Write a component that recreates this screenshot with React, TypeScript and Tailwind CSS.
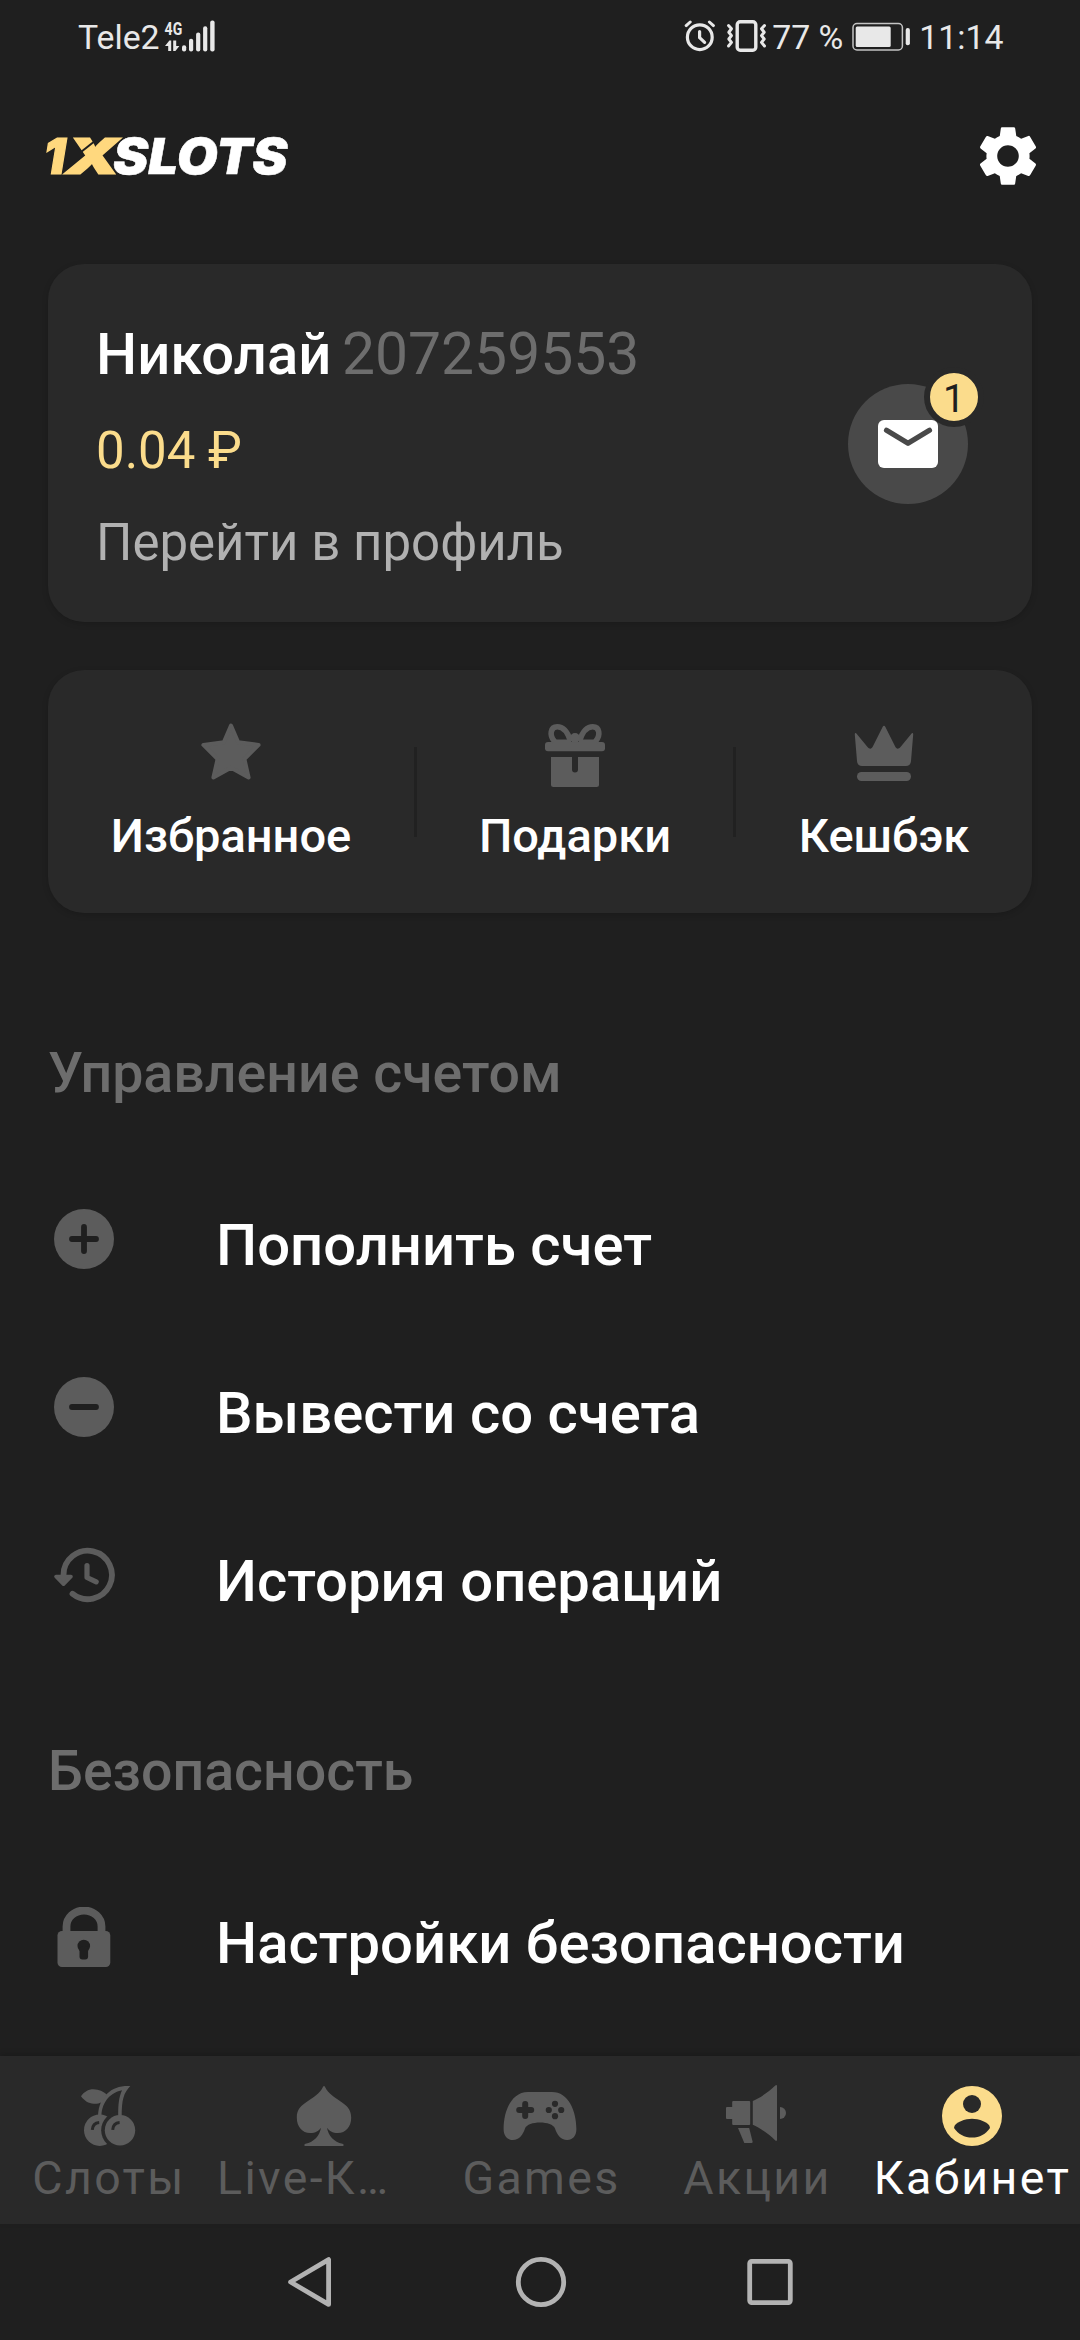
import type { ReactNode } from 'react';
import { MdSettings } from 'react-icons/md';

const BG = '#1f1f1f';
const CARD = '#292929';

function AlarmIcon() {
  return (
    <svg className="mt-[20px] h-[34px] w-[32px]" viewBox="684 20 32 34" fill="none" stroke="#e8e8e8" strokeLinecap="round">
      <circle cx="699.8" cy="37.2" r="12.4" strokeWidth="3.2" />
      <path d="M699.6 31.5V37.7L704.6 42.4" strokeWidth="3.2" strokeLinejoin="round" />
      <path d="M686.2 25.6L690.2 22M713.4 25.6L709.4 22" strokeWidth="3" />
    </svg>
  );
}

function VibrateIcon() {
  return (
    <svg className="ml-[10px] mt-[19px] h-[34px] w-[42px]" viewBox="726 19 42 34" fill="none" stroke="#e8e8e8">
      <rect x="737.2" y="21.7" width="18.6" height="28.6" rx="3" strokeWidth="3.4" />
      <path d="M728.5 25.5L731.5 28.8L728.8 32.2L731.5 35.6L728.8 39L731.5 42.4L728.5 46" strokeWidth="3" strokeLinecap="round" strokeLinejoin="round" />
      <path d="M764.5 25.5L761.5 28.8L764.2 32.2L761.5 35.6L764.2 39L761.5 42.4L764.5 46" strokeWidth="3" strokeLinecap="round" strokeLinejoin="round" />
    </svg>
  );
}

function BatteryIcon() {
  return (
    <svg className="ml-[8px] mt-[22px] h-[30px] w-[60px]" viewBox="851 22 60 30" fill="#e8e8e8">
      <rect x="853" y="23.6" width="49.4" height="26.4" rx="4" fill="none" stroke="#c4c4c4" strokeWidth="1.5" />
      <rect x="855.7" y="26.4" width="35" height="20.6" rx="1.5" />
      <rect x="905.7" y="28" width="4.2" height="17.2" rx="2" />
    </svg>
  );
}

function SignalIcon() {
  return (
    <svg className="ml-[4px] mt-[18px] h-[36px] w-[52px]" viewBox="164 18 52 36" fill="#e8e8e8">
      <text x="164.6" y="34.6" fontFamily="Roboto, sans-serif" fontWeight="700" fontSize="18.6" textLength="17.6" lengthAdjust="spacingAndGlyphs">4G</text>
      <path d="M165 46L169.4 40.4H171.2V51H168.2V46ZM173.2 40.4H176.2V46H179.4L175.4 51H173.2Z" />
      <rect x="182" y="45.2" width="4.2" height="6.4" rx="2" />
      <rect x="189" y="38.8" width="4.2" height="12.8" rx="2" />
      <rect x="196.1" y="32.4" width="4.2" height="19.2" rx="2" />
      <rect x="203.1" y="26.2" width="4.2" height="25.4" rx="2" />
      <rect x="210.2" y="20.4" width="4.4" height="31.2" rx="2" />
    </svg>
  );
}

function StatusBar() {
  return (
    <div className="flex h-[75px] shrink-0 items-start justify-between pl-[78px] pr-[76.5px] text-[33.8px] leading-[75px] text-[#e8e8e8]">
      <div className="flex items-start">
        <span>Tele2</span>
        <SignalIcon />
      </div>
      <div className="flex items-start">
        <AlarmIcon />
        <VibrateIcon />
        <span className="ml-[4px]">77 %</span>
        <BatteryIcon />
        <span className="ml-[8px]">11:14</span>
      </div>
    </div>
  );
}

function Logo() {
  return (
    <svg className="h-[56px] w-[254px] overflow-visible" viewBox="40 128 254 56" fontFamily="Inter, sans-serif" fontWeight="900" fontStyle="italic" fontSize="49.5">
      <text x="43.5" y="174" fill="#ffd87e" stroke="#ffd87e" strokeWidth="1.2" textLength="22" lengthAdjust="spacingAndGlyphs">1</text>
      <text x="65.5" y="174" fill="#ffd87e" stroke="#ffd87e" strokeWidth="1.2" textLength="54" lengthAdjust="spacingAndGlyphs">X</text>
      <path d="M81 152L95.5 140.5" stroke={BG} strokeWidth="2" />
      <text x="113" y="174" fill="#fff" stroke="#fff" strokeWidth="0.5" textLength="174.5" lengthAdjust="spacingAndGlyphs">SLOTS</text>
    </svg>
  );
}

function MailButton() {
  return (
    <div className="relative mr-[64px] mt-[120px] flex size-[120px] items-center justify-center rounded-full bg-[#494949]">
      <svg className="h-[48px] w-[60px]" viewBox="0 0 60 48">
        <rect width="60" height="48" rx="6" fill="#fff" />
        <path d="M8.5 10.3L30 23.3L51.5 10.3" fill="none" stroke="#494949" strokeWidth="5.2" strokeLinecap="round" strokeLinejoin="round" />
      </svg>
      <div className="absolute -right-[16px] -top-[17px] flex size-[60px] items-center justify-center rounded-full border-[6px] border-[#292929] bg-[#fbdc8c] pt-[3px] text-[39px] leading-[48px] text-[#1f1f1f]">
        1
      </div>
    </div>
  );
}

function StarIcon() {
  return (
    <svg className="h-[72px] w-[72px]" viewBox="195 718 72 72" fill="#5c5c5c" stroke="#5c5c5c" strokeWidth="4" strokeLinejoin="round">
      <path d="M231 725.5L238.2 742.2L258.6 744.9L244.4 759L248.6 777.5L231 767.8L213.4 777.5L217.6 759L203.4 744.9L223.8 742.2Z" />
    </svg>
  );
}

function GiftIcon() {
  return (
    <svg className="h-[72px] w-[72px]" viewBox="539 718 72 72" fill="#5c5c5c">
      <rect x="545" y="742" width="60" height="9.2" rx="3" />
      <path d="M551 757H572V769.5A3 3 0 0 0 578 769.5V757H599V784.5A2.5 2.5 0 0 1 596.5 787H553.5A2.5 2.5 0 0 1 551 784.5Z" />
      <path d="M570.5 741C567.5 731.5 562.5 726.8 557.2 726.8C550.5 726.8 549 735 554.5 741.5" fill="none" stroke="#5c5c5c" strokeWidth="5.6" />
      <path d="M579.5 741C582.5 731.5 587.5 726.8 592.8 726.8C599.5 726.8 601 735 595.5 741.5" fill="none" stroke="#5c5c5c" strokeWidth="5.6" />
      <path d="M554 739.5H571V742.5H554ZM579 739.5H596V742.5H579Z" />
      <circle cx="575" cy="738" r="5" />
    </svg>
  );
}

function CrownIcon() {
  return (
    <svg className="h-[72px] w-[72px]" viewBox="848 718 72 72" fill="#5c5c5c">
      <path d="M854.8 734.5C854.6 732.7 855.9 732.5 856.8 734L867.5 747C869.5 749.2 871.5 749.2 872.7 746.8L882.6 727C883.4 725.4 884.6 725.4 885.4 727L895.3 746.8C896.5 749.2 898.5 749.2 900.5 747L911.2 734C912.1 732.5 913.4 732.7 913.2 734.5L911 761C910.6 764.5 909 766 906 766H862C859 766 857.4 764.5 857 761Z" />
      <rect x="857" y="772" width="54" height="9" rx="4.5" />
    </svg>
  );
}

function PlusIcon() {
  return (
    <svg className="size-[60px]" viewBox="0 0 60 60">
      <circle cx="30" cy="30" r="30" fill="#5c5c5c" />
      <path d="M30 18V42M18 30H42" stroke={BG} strokeWidth="5.8" strokeLinecap="round" />
    </svg>
  );
}

function MinusIcon() {
  return (
    <svg className="size-[60px]" viewBox="0 0 60 60">
      <circle cx="30" cy="30" r="30" fill="#5c5c5c" />
      <path d="M18 30H42" stroke={BG} strokeWidth="5.8" strokeLinecap="round" />
    </svg>
  );
}

function HistoryIcon() {
  return (
    <svg className="size-[62px]" viewBox="53 1544 62 62" fill="none" stroke="#5c5c5c" strokeLinecap="round" strokeLinejoin="round">
      <path d="M63.5 1575A24.2 24.2 0 1 1 72.5 1593.8" strokeWidth="5.8" />
      <path d="M56 1576.5H71L63.5 1584.2Z" fill="#5c5c5c" strokeWidth="3.6" />
      <path d="M87 1565.5V1577.5L96.2 1581.8" strokeWidth="5.2" />
    </svg>
  );
}

function LockIcon() {
  return (
    <svg className="size-[60px]" viewBox="53.5 1907 60 60">
      <path d="M66 1934V1926.5A17.5 16 0 0 1 101 1926.5V1934" fill="none" stroke="#5c5c5c" strokeWidth="7.8" />
      <rect x="57" y="1931" width="52.8" height="36" rx="4.5" fill="#5c5c5c" />
      <circle cx="83.3" cy="1946" r="6.3" fill={BG} />
      <rect x="79" y="1946" width="8.6" height="13.6" rx="3" fill={BG} />
    </svg>
  );
}

function CherryIcon() {
  return (
    <svg className="h-[72px] w-[84px]" viewBox="66 2080 84 72" fill="#5c5c5c">
      <circle cx="99.7" cy="2130.2" r="15.7" />
      <circle cx="120" cy="2130.2" r="18.8" fill={CARD} />
      <circle cx="120" cy="2130.2" r="15.2" />
      <path d="M98 2116C98.5 2105 102 2098.5 107 2093.7C113 2088 120 2085.6 130.3 2086C123.5 2093 121.7 2100 121.7 2116H118.2C118.2 2104 118.8 2098 122 2090.3C112 2092 101.7 2101 101.5 2116Z" />
      <path d="M81 2096.3C84 2092 88 2089.3 93.5 2089.3C99 2089.3 103.5 2091.5 106.8 2094.6C105 2097 103.5 2099.5 102.3 2102C99 2103.6 96.5 2103.8 93.7 2103.7C88.5 2103.5 84.5 2101 81 2096.3Z" />
      <path d="M92.3 2129.8C92.6 2125 95 2122.7 99.2 2122.4M112.7 2129.8C113 2125 115.4 2122.7 119.6 2122.4" fill="none" stroke={CARD} strokeWidth="3" />
    </svg>
  );
}

function SpadeIcon() {
  return (
    <svg className="h-[72px] w-[84px]" viewBox="282 2080 84 72" fill="#5c5c5c">
      <path d="M323.2 2086.5C323.6 2085.8 324.4 2085.8 324.8 2086.5C332 2101.5 351.2 2101 351.2 2117.5C351.2 2127 345.5 2133 338 2133C332.5 2133 329 2131 326.9 2127.5C328.5 2136 334 2142 342.5 2143.8C344 2144.2 344 2146 342.8 2146H305.2C304 2146 304 2144.2 305.5 2143.8C314 2142 319.5 2136 321.1 2127.5C319 2131 315.5 2133 310 2133C302.5 2133 296.8 2127 296.8 2117.5C296.8 2101 316 2101.5 323.2 2086.5Z" />
    </svg>
  );
}

function GamepadIcon() {
  return (
    <svg className="h-[72px] w-[84px]" viewBox="498 2080 84 72" fill="#5c5c5c">
      <path d="M528 2092H552C568.5 2092 576.4 2111 576.4 2129C576.4 2136 572.5 2140 567.3 2140C560.5 2140 557 2134.5 555 2128.5C553.5 2124.5 547 2122.5 540 2122.5C533 2122.5 526.5 2124.5 525 2128.5C523 2134.5 519.5 2140 512.7 2140C507.5 2140 503.6 2136 503.6 2129C503.6 2111 511.5 2092 528 2092Z" />
      <path d="M525.2 2104V2116M519.2 2110H531.2" stroke={CARD} strokeWidth="6" strokeLinecap="round" />
      <g fill={CARD}>
        <circle cx="555" cy="2103.8" r="3.1" />
        <circle cx="555" cy="2116.2" r="3.1" />
        <circle cx="548.8" cy="2110" r="3.1" />
        <circle cx="561.2" cy="2110" r="3.1" />
      </g>
    </svg>
  );
}

function MegaphoneIcon() {
  return (
    <svg className="h-[72px] w-[84px]" viewBox="714 2080 84 72" fill="#5c5c5c">
      <path d="M733.2 2101H749.2Q750.2 2101 750.2 2102V2124Q750.2 2125 749.2 2125H733.2Q732.2 2125 732.2 2124V2119H727Q726 2119 726 2118V2108Q726 2107 727 2107H732.2V2102Q732.2 2101 733.2 2101Z" />
      <path d="M752.8 2101C760 2098 769 2091.5 775.3 2085.5Q777 2084.3 777 2086.5V2139.5Q777 2141.7 775.3 2140.5C769 2134 760 2128 752.8 2124.8Z" />
      <path d="M780 2107A6 6 0 0 1 780 2119Z" />
      <path d="M738 2128H749.2L752.6 2141.5Q752.8 2143 751.5 2143H744.3Z" />
    </svg>
  );
}

function AccountIcon() {
  return (
    <svg className="h-[72px] w-[84px]" viewBox="930 2080 84 72">
      <circle cx="972" cy="2116" r="30" fill="#fbdc8c" />
      <circle cx="972" cy="2104" r="9" fill={CARD} />
      <path d="M972 2137.6C964.5 2137.6 957.9 2133.8 954 2127.9C954.1 2122 966 2118.7 972 2118.7C978 2118.7 989.9 2122 990 2127.9C986.1 2133.8 979.5 2137.6 972 2137.6Z" fill={CARD} />
    </svg>
  );
}

function Tile({ icon, label, width }: { icon: ReactNode; label: string; width: string }) {
  return (
    <div className={`flex flex-col items-center pt-[48px] ${width}`}>
      {icon}
      <span className="mt-[18px] whitespace-nowrap text-[47px] font-medium leading-[56px] text-white">{label}</span>
    </div>
  );
}

function Divider() {
  return <div className="mt-[77px] h-[90px] w-[3px] bg-[#212121]" />;
}

function Section({ title, children }: { title: string; children: ReactNode }) {
  return (
    <section>
      <h2 className="ml-[48px] text-[55.5px] font-medium leading-[64px] text-[#6d6d6d]">{title}</h2>
      <div className="mt-[55px]">{children}</div>
    </section>
  );
}

function Row({ icon, label }: { icon: ReactNode; label: string }) {
  return (
    <div className="flex h-[168px] items-center">
      <div className="mb-[12px] flex w-[168px] justify-center">{icon}</div>
      <span className="ml-[48px] whitespace-nowrap text-[58px] font-medium leading-[70px] text-white">{label}</span>
    </div>
  );
}

const tabs = [
  { icon: <CherryIcon />, label: 'Слоты', tone: 'text-[#5c5c5c] pl-[2px]' },
  { icon: <SpadeIcon />, label: 'Live-К…', tone: 'text-[#5c5c5c] self-start pl-[1px]' },
  { icon: <GamepadIcon />, label: 'Games', tone: 'text-[#5c5c5c] pl-[3px]' },
  { icon: <MegaphoneIcon />, label: 'Акции', tone: 'text-[#5c5c5c] pl-[3px]' },
  { icon: <AccountIcon />, label: 'Кабинет', tone: 'text-white pl-[1px]' },
];

export default function App() {
  return (
    <div className="flex h-[2340px] w-[1080px] flex-col overflow-hidden bg-[#1f1f1f] font-['Roboto',sans-serif]">
      <StatusBar />
      <header className="flex h-[162px] shrink-0 items-center justify-between pl-[40px] pr-[36px]">
        <Logo />
        <MdSettings className="size-[72px] text-white" />
      </header>

      <main className="flex-1 overflow-hidden pt-[27px]">
        <div className="mx-[48px] flex h-[358px] justify-between rounded-[36px] bg-[#292929] shadow-[0_2px_6px_rgba(0,0,0,0.16)]">
          <div className="ml-[48px] pt-[55px]">
            <div className="flex whitespace-nowrap leading-[70px]">
              <span className="text-[58px] font-medium text-white">Николай</span>
              <span className="ml-[10.5px] text-[58.8px] text-[#6d6d6d]">207259553</span>
            </div>
            <div className="mt-[32px] text-[51px] leading-[60px] text-[#fbdc8c]">0.04 ₽</div>
            <div className="mt-[32px] text-[51px] leading-[60px] text-[#b1b1b1]">Перейти в профиль</div>
          </div>
          <MailButton />
        </div>

        <div className="mx-[48px] mt-[48px] flex h-[243px] rounded-[36px] bg-[#292929] shadow-[0_2px_6px_rgba(0,0,0,0.16)]">
          <Tile icon={<StarIcon />} label="Избранное" width="w-[366px]" />
          <Divider />
          <Tile icon={<GiftIcon />} label="Подарки" width="w-[316px]" />
          <Divider />
          <Tile icon={<CrownIcon />} label="Кешбэк" width="w-[296px]" />
        </div>

        <div className="mt-[129px] flex flex-col gap-[75px]">
          <Section title="Управление счетом">
            <Row icon={<PlusIcon />} label="Пополнить счет" />
            <Row icon={<MinusIcon />} label="Вывести со счета" />
            <Row icon={<HistoryIcon />} label="История операций" />
          </Section>
          <Section title="Безопасность">
            <Row icon={<LockIcon />} label="Настройки безопасности" />
          </Section>
        </div>
      </main>

      <nav className="grid h-[168px] shrink-0 grid-cols-5 bg-[#292929] shadow-[0_-2px_6px_rgba(0,0,0,0.16)]">
        {tabs.map((tab) => (
          <div key={tab.label} className="flex flex-col items-center pt-[24px]">
            {tab.icon}
            <span className={`-mt-[2px] whitespace-nowrap text-[46.5px] leading-[56px] tracking-[2.35px] ${tab.tone}`}>{tab.label}</span>
          </div>
        ))}
      </nav>

      <div className="flex h-[116px] shrink-0 items-center justify-center">
        <svg className="h-[52px] w-[46px]" viewBox="286 2256 46 52" fill="none" stroke="#b3b3b3" strokeWidth="4.8" strokeLinejoin="round">
          <path d="M289.6 2282L327.6 2259.6V2304.4Z" />
        </svg>
        <svg className="ml-[182px] size-[52px]" viewBox="514 2256 52 52" fill="none" stroke="#b3b3b3" strokeWidth="4.8">
          <circle cx="540" cy="2282" r="22.7" />
        </svg>
        <svg className="ml-[179px] h-[48px] w-[48px]" viewBox="745 2258 48 48" fill="none" stroke="#b3b3b3" strokeWidth="4.8">
          <rect x="748.7" y="2261.4" width="40.6" height="41.2" rx="2" />
        </svg>
      </div>
    </div>
  );
}
